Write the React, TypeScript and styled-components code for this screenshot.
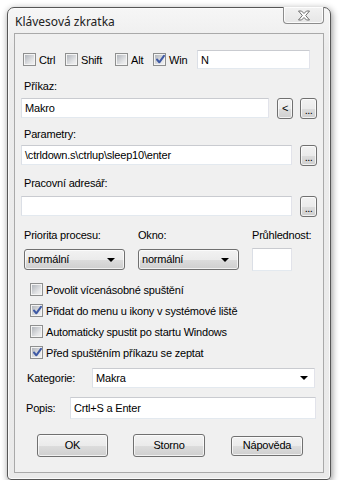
import React from "react";
import styled, { createGlobalStyle } from "styled-components";

const Global = createGlobalStyle`
  body {
    margin: 0;
    background: #ffffff;
    font-family: "Liberation Sans", Arial, sans-serif;
    font-size: 11px;
    letter-spacing: -0.2px;
    color: #000;
  }
`;

const Page = styled.div`
  padding: 7px 0 0 7px;
`;

const Window = styled.div`
  width: 324px;
  height: 473px;
  box-sizing: border-box;
  border: 1px solid #565656;
  border-radius: 7px 7px 4px 4px;
  background: linear-gradient(#f6f6f6, #ececec 40px, #eaeaea);
  box-shadow: 1px 2px 7px rgba(0, 0, 0, 0.45), inset 0 0 0 1px #fbfbfb;
  padding: 0 6px 6px;
  display: flex;
  flex-direction: column;
`;

const TitleBar = styled.div`
  height: 25px;
  display: flex;
  justify-content: space-between;
  align-items: flex-start;
`;

const Title = styled.div`
  font-family: "Noto Sans", "Liberation Sans", sans-serif;
  font-size: 12px;
  letter-spacing: 0;
  line-height: 14px;
  padding: 7px 0 0 1px;
  color: #222;
`;

const CloseBtn = styled.div`
  width: 41px;
  height: 17px;
  margin-top: -1px;
  box-sizing: border-box;
  border: 1px solid #8c8c8c;
  border-top: none;
  border-radius: 0 0 4px 4px;
  background: linear-gradient(#f2f2f2, #e6e6e6);
  box-shadow: inset 0 0 0 1px rgba(255, 255, 255, 0.8);
  display: flex;
  align-items: center;
  justify-content: center;
`;

const Client = styled.div`
  flex: 1;
  background: #f0f0f0;
  box-shadow: inset 0 0 0 1px #a9a9a9;
  padding: 0 7px;
  display: flex;
  flex-direction: column;
`;

const Row = styled.div<{ $top: number; $h: number; $left?: number }>`
  margin-top: ${(p) => p.$top}px;
  height: ${(p) => p.$h}px;
  padding-left: ${(p) => p.$left ?? 0}px;
  display: flex;
  align-items: center;
`;

const Label = styled.div<{ $top: number; $left?: number; $w?: number }>`
  margin-top: ${(p) => p.$top}px;
  margin-left: ${(p) => p.$left ?? 3}px;
  height: 14px;
  line-height: 14px;
  ${(p) => (p.$w ? `width: ${p.$w}px; flex: none;` : "")}
`;

const Input = styled.div<{ $w: number; $h?: number; $ml?: number }>`
  width: ${(p) => p.$w}px;
  height: ${(p) => p.$h ?? 20}px;
  margin-left: ${(p) => p.$ml ?? 0}px;
  flex: none;
  box-sizing: border-box;
  background: #fff;
  border: 1px solid;
  border-color: #c9cbd0 #e2e3ea #e3e9ef #dbdfe6;
  padding-left: 3px;
  display: flex;
  align-items: center;
  white-space: nowrap;
`;

const Button = styled.div<{ $w: number; $h?: number; $ml?: number }>`
  width: ${(p) => p.$w}px;
  height: ${(p) => p.$h ?? 23}px;
  margin-left: ${(p) => p.$ml ?? 0}px;
  flex: none;
  box-sizing: border-box;
  border: 1px solid #707070;
  border-radius: 3px;
  background: linear-gradient(#f2f2f2 0%, #ebebeb 50%, #dddddd 50%, #cfcfcf 100%);
  box-shadow: inset 0 0 0 1px rgba(255, 255, 255, 0.7);
  display: flex;
  align-items: center;
  justify-content: center;
  font-weight: 400;
  line-height: 1;
`;

const Dots = styled.span`
  margin-top: 5px;
  letter-spacing: -0.5px;
`;

const Dropdown = styled(Button)`
  justify-content: space-between;
  padding: 0 9px 0 3px;
`;

const Arrow = styled.span`
  width: 0;
  height: 0;
  border-left: 4px solid transparent;
  border-right: 4px solid transparent;
  border-top: 4px solid #000;
`;

const Combo = styled(Input)`
  justify-content: space-between;
  padding-right: 6px;
`;

const Check = styled.label<{ $w?: number }>`
  display: flex;
  align-items: center;
  gap: 3px;
  ${(p) => (p.$w ? `width: ${p.$w}px; flex: none;` : "")}
  white-space: nowrap;
`;

const Box = styled.span`
  width: 13px;
  height: 13px;
  box-sizing: border-box;
  border: 1px solid #8e8f8f;
  background: #f4f4f4;
  padding: 1px;
  flex: none;
  position: relative;
  &::before {
    content: "";
    display: block;
    width: 9px;
    height: 9px;
    background: linear-gradient(135deg, #b2b6bc, #e4e5e7 70%, #f0f0f0);
  }
`;

const Tick = styled.svg`
  position: absolute;
  left: 1px;
  top: 0px;
`;

const CheckList = styled.div`
  margin-top: 8px;
  padding-left: 9px;
  display: flex;
  flex-direction: column;
`;

const CheckRow = styled.div`
  height: 21px;
  display: flex;
  align-items: center;
`;

const ProcGrid = styled.div`
  margin-top: 12px;
  padding-left: 3px;
  display: grid;
  grid-template-columns: 114px 114px 40px;
  grid-template-rows: 14px 23px;
  row-gap: 6px;
  align-items: center;
`;

const GridLabel = styled.div`
  line-height: 14px;
  white-space: nowrap;
`;

const CheckBox = ({ checked }: { checked?: boolean }) => (
  <Box>
    {checked && (
      <Tick width="11" height="11" viewBox="0 0 11 11">
        <path
          d="M2 5.5 L4.3 8.3 L9 1.8"
          fill="none"
          stroke="#3f5aa5"
          strokeWidth="2"
          strokeLinecap="round"
          strokeLinejoin="round"
        />
      </Tick>
    )}
  </Box>
);

const CheckItem = ({ label, checked, w }: { label: string; checked?: boolean; w?: number }) => (
  <Check $w={w}>
    <CheckBox checked={checked} />
    <span>{label}</span>
  </Check>
);

export default function App() {
  return (
    <Page>
      <Global />
      <Window>
        <TitleBar>
          <Title>Klávesová zkratka</Title>
          <CloseBtn>
            <svg width="14" height="11" viewBox="0 0 14 11">
              <path
                d="M1.5 1 H4.5 L7 3.5 L9.5 1 H12.5 L8.7 5.5 L12.5 10 H9.5 L7 7.5 L4.5 10 H1.5 L5.3 5.5 Z"
                fill="#ffffff"
                stroke="#6e6e6e"
                strokeWidth="1"
                strokeLinejoin="round"
              />
            </svg>
          </CloseBtn>
        </TitleBar>
        <Client>
          <Row $top={17} $h={19} $left={2}>
            <CheckItem label="Ctrl" w={42} />
            <CheckItem label="Shift" w={50} />
            <CheckItem label="Alt" w={38} />
            <CheckItem label="Win" checked w={44} />
            <Input $w={113} $h={19}>N</Input>
          </Row>

          <Label $top={10}>Příkaz:</Label>
          <Row $top={5} $h={20}>
            <Input $w={248}>Makro</Input>
            <Button $w={16} $h={21} $ml={8}>&lt;</Button>
            <Button $w={17} $h={21} $ml={7}>
              <Dots>...</Dots>
            </Button>
          </Row>

          <Label $top={9}>Parametry:</Label>
          <Row $top={4} $h={20}>
            <Input $w={271}>\ctrldown.s\ctrlup\sleep10\enter</Input>
            <Button $w={17} $h={21} $ml={8}>
              <Dots>...</Dots>
            </Button>
          </Row>

          <Label $top={11}>Pracovní adresář:</Label>
          <Row $top={6} $h={20}>
            <Input $w={271} />
            <Button $w={17} $h={21} $ml={8}>
              <Dots>...</Dots>
            </Button>
          </Row>

          <ProcGrid>
            <GridLabel>Priorita procesu:</GridLabel>
            <GridLabel>Okno:</GridLabel>
            <GridLabel>Průhlednost:</GridLabel>
            <Dropdown $w={101} $h={21}>
              normální
              <Arrow />
            </Dropdown>
            <Dropdown $w={101} $h={21}>
              normální
              <Arrow />
            </Dropdown>
            <Input $w={40} $h={23} />
          </ProcGrid>

          <CheckList>
            <CheckRow>
              <CheckItem label="Povolit vícenásobné spuštění" />
            </CheckRow>
            <CheckRow>
              <CheckItem label="Přidat do menu u ikony v systémové liště" checked />
            </CheckRow>
            <CheckRow>
              <CheckItem label="Automaticky spustit po startu Windows" />
            </CheckRow>
            <CheckRow>
              <CheckItem label="Před spuštěním příkazu se zeptat" checked />
            </CheckRow>
          </CheckList>

          <Row $top={5} $h={20}>
            <Label $top={0} $left={6} $w={65}>Kategorie:</Label>
            <Combo $w={223}>
              Makra
              <Arrow />
            </Combo>
          </Row>

          <Row $top={9} $h={22}>
            <Label $top={0} $left={5} $w={44}>Popis:</Label>
            <Input $w={246} $h={22}>Crtl+S a Enter</Input>
          </Row>

          <Row $top={15} $h={23} $left={16}>
            <Button $w={71}>OK</Button>
            <Button $w={72} $ml={25}>Storno</Button>
            <Button $w={72} $h={20} $ml={26}>Nápověda</Button>
          </Row>
        </Client>
      </Window>
    </Page>
  );
}
